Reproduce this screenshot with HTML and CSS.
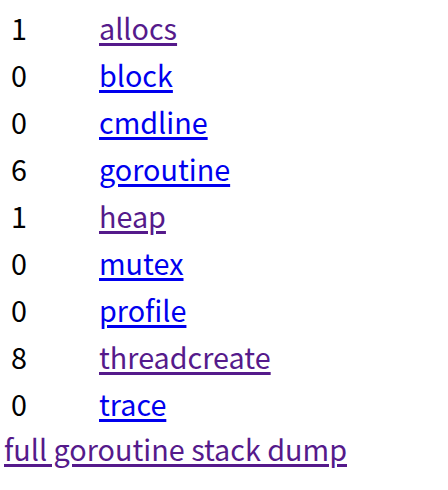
FILE: index.html
```html
<!DOCTYPE html>
<html>
<head>
<meta charset="utf-8">
<title>/debug/pprof/</title>
<link rel="stylesheet" href="styles.css">
</head>
<body>
<table class="profiles">
<tr><td class="count">1</td><td><a class="visited" href="#">allocs</a></td></tr>
<tr><td class="count">0</td><td><a href="#">block</a></td></tr>
<tr><td class="count">0</td><td><a href="#">cmdline</a></td></tr>
<tr><td class="count">6</td><td><a href="#">goroutine</a></td></tr>
<tr><td class="count">1</td><td><a class="visited" href="#">heap</a></td></tr>
<tr><td class="count">0</td><td><a href="#">mutex</a></td></tr>
<tr><td class="count">0</td><td><a href="#">profile</a></td></tr>
<tr><td class="count">8</td><td><a class="visited" href="#">threadcreate</a></td></tr>
<tr><td class="count">0</td><td><a href="#">trace</a></td></tr>
</table>
<a class="visited dump" href="#">full goroutine stack dump</a>
</body>
</html>
```
FILE: styles.css
```css
html, body {
  margin: 0;
  background: #fff;
}
body {
  padding: 2px 0 0 4px;
  font-family: "Noto Sans CJK KR", "Noto Sans", sans-serif;
  font-size: 28.75px;
  line-height: 39px;
  color: #000;
}
.profiles {
  border-collapse: separate;
  border-spacing: 4px;
  margin: 0;
}
.profiles td {
  padding: 2px;
  font-size: 28.75px;
  line-height: 39px;
}
.profiles td.count {
  width: 81px;
  padding-left: 3px;
  padding-right: 1px;
}
a {
  color: #0000ee;
  text-decoration: underline;
  text-decoration-thickness: 3px;
  text-underline-offset: 3px;
}
a.visited {
  color: #551a8b;
}
.dump {
  display: inline-block;
}
```
